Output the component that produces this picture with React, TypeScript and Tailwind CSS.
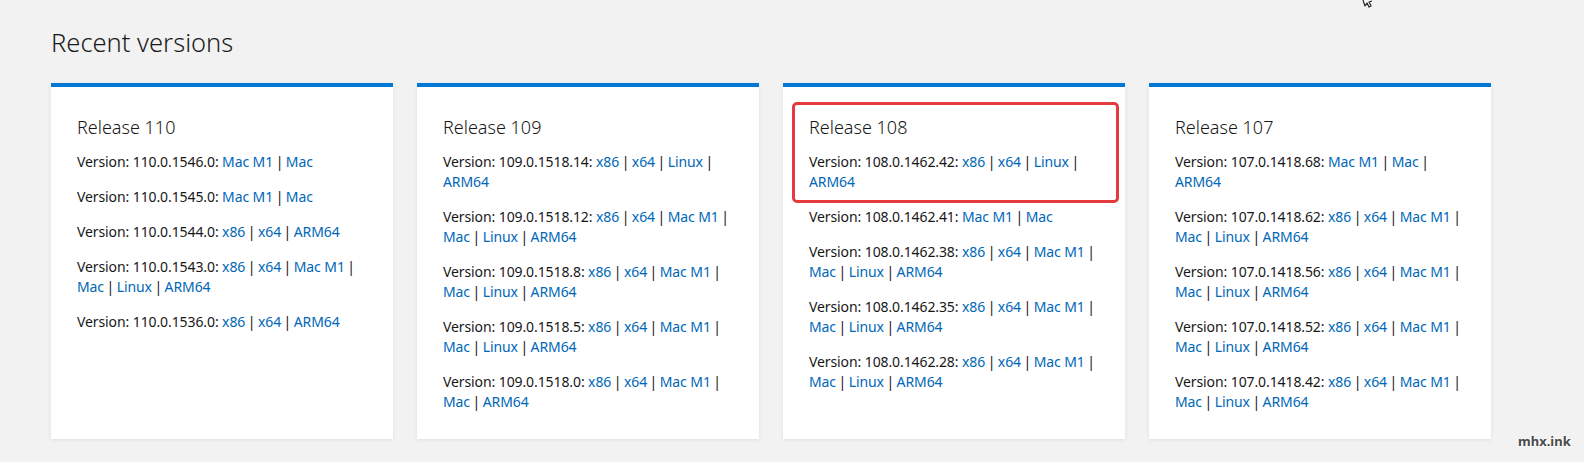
import React from "react";

type Item = { v: string; links: string[] };
type Rel = { title: string; items: Item[]; highlight?: boolean };

const A = ["x86", "x64", "Mac M1", "Mac", "Linux", "ARM64"];

const releases: Rel[] = [
  {
    title: "Release 110",
    items: [
      { v: "110.0.1546.0", links: ["Mac M1", "Mac"] },
      { v: "110.0.1545.0", links: ["Mac M1", "Mac"] },
      { v: "110.0.1544.0", links: ["x86", "x64", "ARM64"] },
      { v: "110.0.1543.0", links: A },
      { v: "110.0.1536.0", links: ["x86", "x64", "ARM64"] },
    ],
  },
  {
    title: "Release 109",
    items: [
      { v: "109.0.1518.14", links: ["x86", "x64", "Linux", "ARM64"] },
      { v: "109.0.1518.12", links: A },
      { v: "109.0.1518.8", links: A },
      { v: "109.0.1518.5", links: A },
      { v: "109.0.1518.0", links: ["x86", "x64", "Mac M1", "Mac", "ARM64"] },
    ],
  },
  {
    title: "Release 108",
    highlight: true,
    items: [
      { v: "108.0.1462.42", links: ["x86", "x64", "Linux", "ARM64"] },
      { v: "108.0.1462.41", links: ["Mac M1", "Mac"] },
      { v: "108.0.1462.38", links: A },
      { v: "108.0.1462.35", links: A },
      { v: "108.0.1462.28", links: A },
    ],
  },
  {
    title: "Release 107",
    items: [
      { v: "107.0.1418.68", links: ["Mac M1", "Mac", "ARM64"] },
      { v: "107.0.1418.62", links: A },
      { v: "107.0.1418.56", links: A },
      { v: "107.0.1418.52", links: A },
      { v: "107.0.1418.42", links: A },
    ],
  },
];

function Card({ r }: { r: Rel }) {
  return (
    <div className="relative bg-white border-t-4 border-[#0078d4] shadow-[0_1px_4px_rgba(0,0,0,0.08)] pl-[26px] pr-6 pt-[26px] pb-[27px]">
      <h2 className="text-[18px] leading-[28px] font-light text-[#171717] mb-[11px]">{r.title}</h2>
      <div className="flex flex-col gap-[15px]">
        {r.items.map((it) => (
          <p key={it.v} className="text-[14px] leading-[20px] tracking-[-0.1px] text-[#171717]">
            Version: {it.v}:{" "}
            {it.links.map((l, i) => (
              <React.Fragment key={l}>
                <a className="text-[#0067b8]">{l}</a>
                {i < it.links.length - 1 ? (
                  <>
                    {" "}
                    <span className="mx-[-1px]">|</span>{" "}
                  </>
                ) : null}
              </React.Fragment>
            ))}
          </p>
        ))}
      </div>
      {r.highlight && (
        <div className="absolute left-[9px] top-[15px] w-[327px] h-[101px] border-[3.5px] border-[#e53b3f] rounded-[5px] pointer-events-none" />
      )}
    </div>
  );
}

export default function App() {
  return (
    <div
      className="relative w-[1584px] h-[462px] bg-[#f2f2f2] overflow-hidden pl-[51px] pt-[22px]"
      style={{ fontFamily: '"Noto Sans", "Open Sans", Arial, sans-serif' }}
    >
      <h1 className="text-[25.5px] leading-[40px] font-light text-[#1b1b1b] mb-[21px]">Recent versions</h1>
      <div className="grid grid-cols-[342px_342px_342px_342px] gap-6">
        {releases.map((r) => (
          <Card key={r.title} r={r} />
        ))}
      </div>
      <svg className="absolute left-[1361px] top-0" width="14" height="9" viewBox="0 0 14 9">
        <path d="M2 0 L4 6 L6 3 L8 7 L10 6 L8 2 L11 1" fill="#fff" stroke="#222" strokeWidth="1.2" strokeLinejoin="round" />
      </svg>
      <div
        className="absolute left-[1518px] top-[433px] text-[13px] font-bold text-[#4a4a4a] leading-[16px]"
        style={{ textShadow: "0 0 2px #fff, 1px 1px 0 #fff" }}
      >
        mhx.ink
      </div>
    </div>
  );
}
